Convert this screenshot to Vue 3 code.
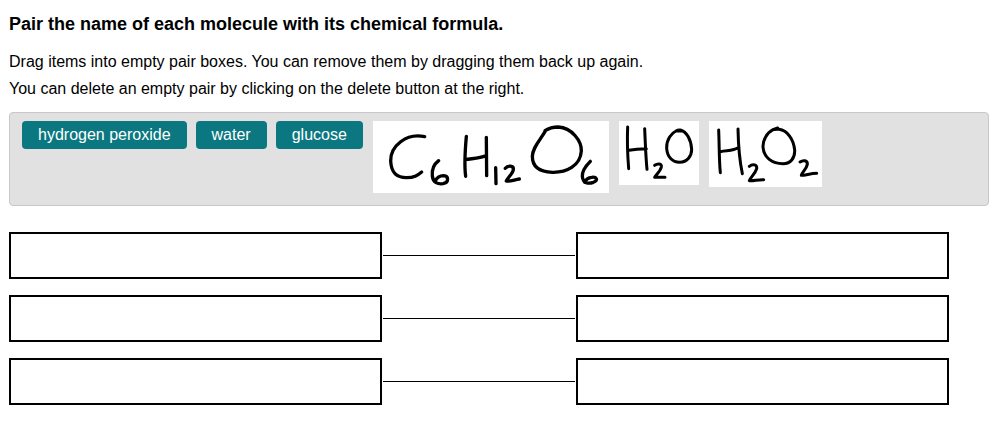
<script setup>
const names = ['hydrogen peroxide', 'water', 'glucose']

const formulas = [
  {
    label: 'C6H12O6',
    width: 236,
    height: 72,
    pen: 10,
    strokes: [
      'M155 47 C100 35 52 75 53 120 C55 160 75 170 100 170 C125 170 135 162 146 153',
      'M197 119 C185 128 176 145 178 165 C180 185 195 190 210 188 C228 185 228 165 212 164 C200 164 190 172 186 182',
      'M280 46 C277 80 273 130 278 166 M340 49 L341 164 M276 116 C300 112 320 112 338 104',
      'M368 140 L369 188',
      'M397 142 C405 132 422 134 421 145 C420 158 405 168 400 180 C410 182 425 176 439 174',
      'M516 29 C530 20 542 18 556 18 C596 20 626 60 625 90 C622 135 580 155 538 154 C500 153 478 138 478 106 C479 80 498 62 516 32',
      'M652 121 C640 133 627 152 628 166 C630 190 650 188 661 184 C678 177 670 167 656 169 C646 170 638 177 635 184'
    ]
  },
  {
    label: 'H2O',
    width: 80,
    height: 64,
    pen: 9,
    strokes: [
      'M26 18 C24 60 26 105 29 143 M77 23 C79 65 80 105 84 145 M30 88 C48 84 65 83 82 83',
      'M107 133 C116 127 129 127 127 138 C124 151 112 160 107 169 L138 169',
      'M171 30 C158 36 142 55 143 82 C145 108 160 124 182 124 C205 124 218 105 218 85 C216 55 203 32 184 27 C178 26 174 28 171 30 L190 29'
    ]
  },
  {
    label: 'H2O2',
    width: 113,
    height: 66,
    pen: 9,
    strokes: [
      'M29 27 C31 70 30 115 34 155 M87 24 C88 75 91 115 100 158 M35 92 C50 86 68 93 90 79',
      'M121 136 C131 128 145 130 143 143 C139 158 125 168 121 179 C135 180 148 175 164 176',
      'M192 26 C174 35 161 58 162 78 C164 110 190 128 222 128 C246 128 258 110 257 87 C254 55 235 28 210 25 C202 24 195 26 192 26 L206 21',
      'M273 123 C283 116 296 118 295 130 C292 145 280 152 277 163 C290 163 305 157 323 157'
    ]
  }
]

const pairs = [1, 2, 3]
</script>

<template>
  <main class="exercise">
    <h1 class="title">Pair the name of each molecule with its chemical formula.</h1>
    <p class="help">
      Drag items into empty pair boxes. You can remove them by dragging them back up again.<br>
      You can delete an empty pair by clicking on the delete button at the right.
    </p>

    <section class="bank">
      <button v-for="name in names" :key="name" class="chip" type="button" draggable="true">{{ name }}</button>
      <button
        v-for="formula in formulas"
        :key="formula.label"
        class="card"
        type="button"
        draggable="true"
        :aria-label="formula.label"
      >
        <svg
          class="sketch"
          :width="formula.width"
          :height="formula.height"
          :viewBox="`0 0 ${formula.width * 3} ${formula.height * 3}`"
          :stroke-width="formula.pen"
          aria-hidden="true"
        >
          <path v-for="(stroke, i) in formula.strokes" :key="i" :d="stroke" />
        </svg>
      </button>
    </section>

    <section class="pairs">
      <div v-for="pair in pairs" :key="pair" class="pair">
        <div class="slot"></div>
        <div class="link"></div>
        <div class="slot"></div>
      </div>
    </section>
  </main>
</template>

<style>
body {
  background: #fff;
}
</style>

<style scoped>
.exercise {
  padding: 10px 7px 16px 9px;
  font-family: "Liberation Sans", Arial, sans-serif;
  font-size: 16px;
  color: #000;
}

.title {
  margin: 0 0 10px;
  font-size: 18px;
  line-height: 28px;
  font-weight: 700;
}

.help {
  margin: 0 0 10px;
  line-height: 27px;
}

.bank {
  display: flex;
  flex-wrap: wrap;
  align-items: flex-start;
  gap: 9px;
  padding: 8px 12px 12px;
  border: 1px solid #c8c8c8;
  border-radius: 4px;
  background: #e1e1e1;
}

.chip,
.card {
  margin: 0;
  border: 0;
  font: inherit;
  cursor: move;
}

.chip {
  padding: 0 16px;
  border-radius: 4px;
  line-height: 28px;
  color: #fff;
  background: #0b7780;
}

.card {
  margin-left: 1px;
  padding: 0;
  background: #fff;
}

.sketch {
  display: block;
  fill: none;
  stroke: #000;
  stroke-linecap: round;
  stroke-linejoin: round;
}

.pairs {
  display: grid;
  gap: 16px;
  padding: 26px 40px 0 0;
}

.pair {
  display: grid;
  grid-template-columns: 1fr 192px 1fr;
  gap: 1px;
  align-items: center;
}

.slot {
  box-sizing: border-box;
  min-height: 47px;
  border: 2px solid #000;
}

.link {
  border-top: 1px solid #000;
}
</style>
